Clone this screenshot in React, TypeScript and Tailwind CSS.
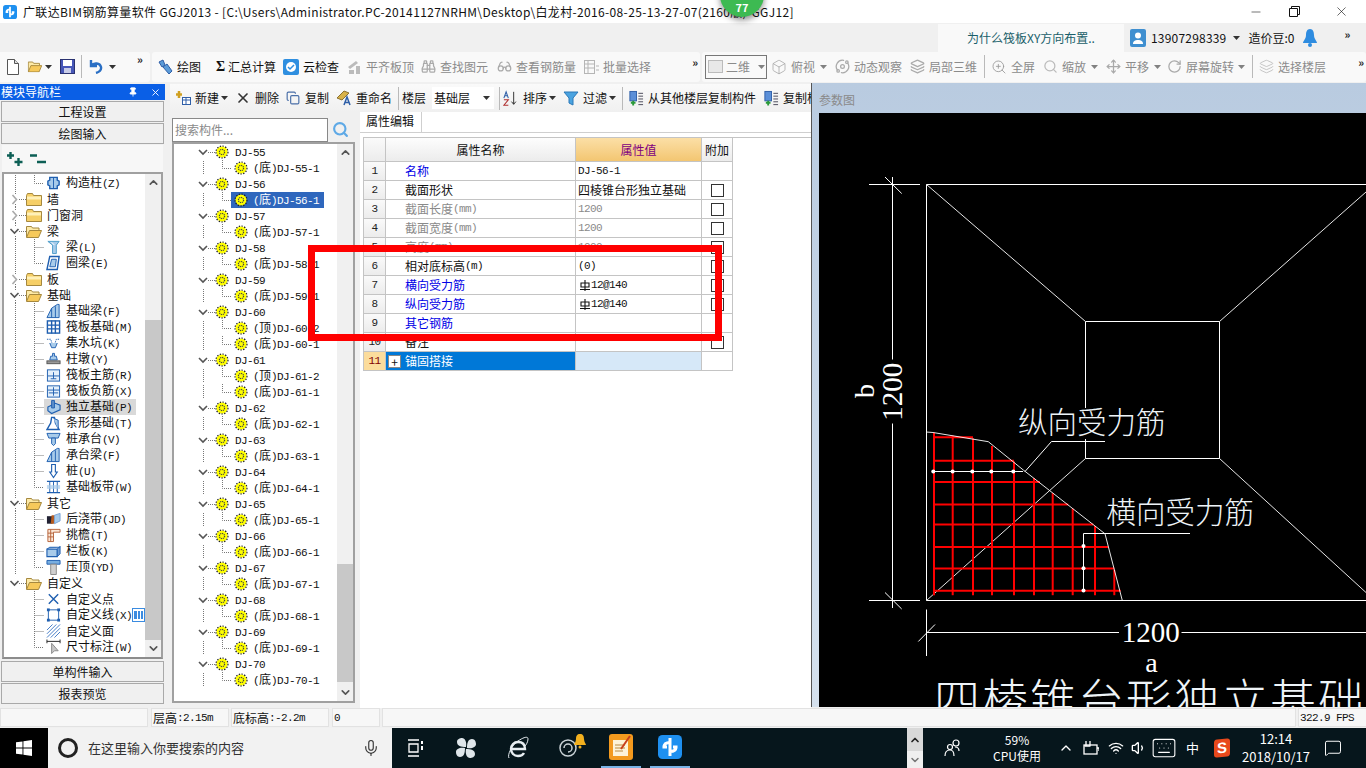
import { ReactNode } from 'react';
import {
  Binoculars, Box, ChevronDown, ChevronUp, Glasses, Keyboard, Layers, MessageSquare, Mic, Minus, Move, Orbit,
  Pin, RotateCw, Search, Volume1, Wifi, X, ZoomIn, Copy,
} from 'lucide-react';

const CJK = "[font-family:'Noto_Sans_CJK_SC',sans-serif]";

// Song-style mix: cjk at 12px, latin narrowed to half width
const Sun = ({ t }: { t: string }) => (
  <>
    {t.split(/([\x20-\x7e]+)/).map((p, i) =>
      /[\x20-\x7e]/.test(p) ? (
        <span key={i} className="[font-family:'Liberation_Mono',monospace] text-[11px] tracking-[-0.6px]">{p}</span>
      ) : (
        <span key={i}>{p}</span>
      ),
    )}
  </>
);

const Caret = ({ className = '' }: { className?: string }) => (
  <svg width="7" height="4" viewBox="0 0 7 4" className={`shrink-0 ${className}`}><path d="M0 0h7L3.5 4z" fill="#333" /></svg>
);
const Sep = () => <div className="w-px h-[23px] bg-[#b9b9b9] shrink-0" />;
const More = ({ className = '' }: { className?: string }) => (
  <span className={`text-[11px] leading-[12px] font-bold text-[#222] self-start mt-[1px] tracking-[-1px] ${className}`}>»</span>
);

const Tool = ({ icon, label, w, gray }: { icon: ReactNode; label: string; w: string; gray?: boolean }) => (
  <div className={`flex items-center gap-[4px] shrink-0 ${w} ${gray ? 'text-[#8b8b8b]' : 'text-[#111]'}`}>
    <span className="w-[16px] h-[16px] flex items-center justify-center shrink-0">{icon}</span>
    <span className="text-[12px] leading-[16px] whitespace-nowrap">{label}</span>
  </div>
);

const Gear = () => (
  <svg width="14" height="14" viewBox="0 0 14 14" className="shrink-0">
    <circle cx="7" cy="7" r="5.6" fill="#ffff00" />
    <circle cx="7" cy="7" r="6" fill="none" stroke="#222" strokeWidth="1.2" strokeDasharray="1.4 1.4" />
    <circle cx="7" cy="7" r="2.6" fill="none" stroke="#444" strokeWidth="1.2" strokeDasharray="1.2 .8" />
  </svg>
);

const FolderShut = () => (
  <svg width="16" height="13" viewBox="0 0 16 13" className="shrink-0">
    <path d="M.5 2.5 1.5.5h5l1 2h8v10H.5z" fill="#f6cf67" stroke="#a5883f" />
    <path d="M1 3.5h14v3H1z" fill="#fff0b8" />
  </svg>
);
const FolderOpen = () => (
  <svg width="16" height="13" viewBox="0 0 16 13" className="shrink-0">
    <path d="M.5 12V1.5h5l1 1.5h6.500v2.500" fill="#fdeaa8" stroke="#a5883f" />
    <path d="M.5 12.500 3.500 5.500h12l-3 7z" fill="#f6c95b" stroke="#a5883f" />
  </svg>
);

const B = '#1f5fb0';
const L = '#a8cbea';
const nav: Record<string, ReactNode> = {
  col: <><path d="M4 2h8v3l2 1v4l-2 1v3H4v-3L2 10V6l2-1z" fill={L} stroke={B} strokeWidth="1.500" /><path d="M8 2v12" stroke={B} /></>,
  beam: <><path d="M2 2h12l-3 4v9H7V6z" fill={L} stroke="#4a9bc9" /><path d="M6 3l3 3" stroke="#fff" /></>,
  ring: <><path d="M4 1h10l-2 14H1z" fill="#fff" stroke={B} strokeWidth="1.500" /><path d="M6 4h5l-1 8H4z" fill={L} stroke={B} /></>,
  fbeam: <><path d="M1 15 6 5l6-4h2v14z" fill={L} stroke={B} /><path d="M6 5v10M10 3v12" stroke={B} /></>,
  raft: <><rect x="1.500" y="1.500" width="13" height="13" fill="#fff" stroke={B} strokeWidth="1.500" /><path d="M1 6h14M1 10h14M6 1v14M10 1v14" stroke={B} strokeWidth="1.500" /></>,
  pit: <><path d="M1 4h4l2 6h2l2-6h4" fill="none" stroke={B} strokeDasharray="1.500 1" /><path d="M4 8l2 5h4l2-5" fill={L} stroke={B} /></>,
  pier: <><path d="M7 2h2v3h2l1 4H4l1-4h2z" fill={L} stroke={B} /><rect x="1" y="10" width="14" height="3" fill="#999" stroke="#555" /></>,
  main: <><rect x="1.500" y="2.500" width="13" height="12" fill="#e4f0fb" stroke={B} /><path d="M2 9h12M8 5v7M5 12h6" stroke={B} /></>,
  neg: <><rect x="1.500" y="2.500" width="13" height="12" fill="#e4f0fb" stroke={B} /><path d="M2 7h12M8 4v9M3 10h10" stroke={B} /></>,
  iso: <><path d="M2 8l8-4 5 2v5l-9 4-4-3z" fill={L} stroke={B} strokeWidth="1.200" /><path d="M6 1h3v8H6z" fill="#5f8fc9" stroke={B} /></>,
  strip: <><path d="M1 15 5 8l1-6h3l1 6 4 7z" fill="#fff" stroke={B} strokeWidth="1.500" /><path d="M8 3l5 2v10" fill={L} stroke={B} /></>,
  cap: <><path d="M1 2h14l-2 5H3z" fill={L} stroke={B} /><path d="M6 7h4v6l-2 2-2-2z" fill={L} stroke={B} /></>,
  pile: <><path d="M6 1h4v8h2l-4 6-4-6h2z" fill="#fff" stroke={B} strokeWidth="1.200" /></>,
  band: <><path d="M1 2h14M1 14h14" stroke={B} strokeWidth="1.500" /><path d="M4 2v12M8 2v12M12 2v12" stroke={B} /><path d="M1 8h14" stroke={L} strokeWidth="4" opacity=".7" /></>,
  post: <><path d="M1 5h6v8H1z" fill="#223" /><path d="M6 4h4l-1 9H5z" fill="#b5591c" /><path d="M9 4l6-2v8l-6 3z" fill={L} stroke="#7aa3d6" /></>,
  eave: <><path d="M2 2h13v3H8v10H2z" fill="#fbe7d6" stroke="#b5623a" /><path d="M2 6h6M2 10h6M5 2v13" stroke="#b5623a" /></>,
  rail: <><path d="M1 6h11v8H1z" fill={L} stroke={B} strokeWidth="1.200" /><path d="M12 6l3-3v8l-3 3zM1 6l3-2h11" fill="#6f9bd1" stroke={B} /></>,
  top: <><path d="M1 1h14v4H1z" fill="#78aee0" stroke={B} /><path d="M5 5h6v11H5z" fill="#cfcfcf" stroke="#888" /></>,
  dot: <path d="M3 3l10 10M13 3 3 13" stroke={B} strokeWidth="1.500" />,
  line: <><rect x="2.500" y="2.500" width="11" height="11" fill="#fff" stroke={B} /><g fill={B}><rect x="1" y="1" width="3" height="3" /><rect x="12" y="1" width="3" height="3" /><rect x="1" y="12" width="3" height="3" /><rect x="12" y="12" width="3" height="3" /></g></>,
  face: <path d="M1 7l6-6M1 11 11 1M1 15 15 1M5 15 15 5M9 15l6-6" stroke="#3f78c4" />,
  dim: <><path d="M1 2h14M1 0v4M15 0v4" stroke="#222" /><path d="M6 4v11l3-3 4 0z" fill="#c8c8c8" stroke="#888" /></>,
};

type NavRow = { label: string; kind: 'open' | 'shut' | 'item'; icon?: string; last?: boolean; sel?: boolean; end?: boolean; tail?: boolean };
const navRows: NavRow[] = [
  { label: '构造柱(Z)', kind: 'item', icon: 'col', last: true },
  { label: '墙', kind: 'shut' },
  { label: '门窗洞', kind: 'shut' },
  { label: '梁', kind: 'open' },
  { label: '梁(L)', kind: 'item', icon: 'beam' },
  { label: '圈梁(E)', kind: 'item', icon: 'ring', last: true },
  { label: '板', kind: 'shut' },
  { label: '基础', kind: 'open' },
  { label: '基础梁(F)', kind: 'item', icon: 'fbeam' },
  { label: '筏板基础(M)', kind: 'item', icon: 'raft' },
  { label: '集水坑(K)', kind: 'item', icon: 'pit' },
  { label: '柱墩(Y)', kind: 'item', icon: 'pier' },
  { label: '筏板主筋(R)', kind: 'item', icon: 'main' },
  { label: '筏板负筋(X)', kind: 'item', icon: 'neg' },
  { label: '独立基础(P)', kind: 'item', icon: 'iso', sel: true },
  { label: '条形基础(T)', kind: 'item', icon: 'strip' },
  { label: '桩承台(V)', kind: 'item', icon: 'cap' },
  { label: '承台梁(F)', kind: 'item', icon: 'fbeam' },
  { label: '桩(U)', kind: 'item', icon: 'pile' },
  { label: '基础板带(W)', kind: 'item', icon: 'band', last: true },
  { label: '其它', kind: 'open' },
  { label: '后浇带(JD)', kind: 'item', icon: 'post' },
  { label: '挑檐(T)', kind: 'item', icon: 'eave' },
  { label: '栏板(K)', kind: 'item', icon: 'rail' },
  { label: '压顶(YD)', kind: 'item', icon: 'top', last: true },
  { label: '自定义', kind: 'open', end: true },
  { label: '自定义点', kind: 'item', icon: 'dot', tail: true },
  { label: '自定义线(X)', kind: 'item', icon: 'line', tail: true },
  { label: '自定义面', kind: 'item', icon: 'face', tail: true },
  { label: '尺寸标注(W)', kind: 'item', icon: 'dim', last: true, tail: true },
];

const Dots = ({ d }: { d: string }) => <path d={d} fill="none" stroke="#777" strokeDasharray="1 1" />;

const NavTree = () => (
  <div className="flex-1 -ml-[4px] pt-[1px] overflow-hidden">
    {navRows.map((r) => (
      <div key={r.label} className="flex items-center h-[16px]">
        {r.kind === 'item' ? (
          <>
            <svg width="44" height="16" className="shrink-0">
              {!r.tail && <Dots d="M15.500 0v16" />}
              <Dots d={r.last ? 'M34.500 0v8.500h10' : 'M34.500 0v16M34.500 8.500h10'} />
            </svg>
            <div className={`flex items-center h-[16px] gap-[5px] pl-[2px] w-[92px] ${r.sel ? 'bg-[#d9d9d9]' : ''}`}>
              <svg width="15" height="16" viewBox="0 0 16 16" className="shrink-0">{nav[r.icon!]}</svg>
              <span className="text-[12px] leading-[16px] text-[#111] whitespace-nowrap"><Sun t={r.label} /></span>
            </div>
            {r.label === '自定义线(X)' && (
              <svg width="13" height="14" viewBox="0 0 13 14" className="shrink-0 -ml-[3px]"><rect x=".5" y=".5" width="12" height="13" fill="#fff" stroke="#3a8be0" /><path d="M2 3h3v8H2zM6 3h2v8H6zM9 3h2v8H9z" fill="#3a8be0" /></svg>
            )}
          </>
        ) : (
          <>
            <svg width="26" height="16" className="shrink-0">
              <Dots d={r.end ? 'M19 8.500h7' : 'M19 8.500h7M15.500 13v3M15.500 0v3'} />
              <path d={r.kind === 'open' ? 'M10.500 6l4 4 4-4' : 'M12.500 4l4 4.500-4 4.500'} fill="none" stroke={r.kind === 'open' ? '#555' : '#aaa'} strokeWidth="1.600" />
            </svg>
            {r.kind === 'open' ? <FolderOpen /> : <FolderShut />}
            <span className="text-[12px] leading-[16px] text-[#111] ml-[5px]">{r.label}</span>
          </>
        )}
      </div>
    ))}
  </div>
);

const NavBtn = ({ label }: { label: string }) => (
  <div className="h-[21px] mx-[1px] mb-[1px] flex items-center justify-center bg-[#f0f0f0] border border-[#a9a9a9] text-[12px] leading-[16px] text-[#111] shrink-0">{label}</div>
);

const VScroll = ({ thumb }: { thumb: string }) => (
  <div className="w-[16px] shrink-0 flex flex-col items-center bg-[#f0f0f0]">
    <ChevronUp size={13} strokeWidth={3} className="text-[#555] my-[2px] shrink-0" />
    <div className="flex-1 w-full flex flex-col justify-end"><div className={`w-full bg-[#c8c8c8] ${thumb}`} /></div>
    <ChevronDown size={13} strokeWidth={3} className="text-[#555] my-[2px] shrink-0" />
  </div>
);

const djNums = [55, 56, 57, 58, 59, 60, 61, 62, 63, 64, 65, 66, 67, 68, 69, 70];

const DjTree = () => (
  <div className="flex-1 overflow-hidden">
    {djNums.map((n) => (
      <div key={n}>
        <div className="flex items-center h-[16px]">
          <svg width="41" height="16" className="shrink-0">
            <path d="M25 6l4 4 4-4" fill="none" stroke="#555" strokeWidth="1.600" />
            <Dots d="M34 8.500h7" />
          </svg>
          <Gear />
          <span className="ml-[6px] text-[12px] leading-[16px] text-[#111]"><Sun t={`DJ-${n}`} /></span>
        </div>
        {(n === 60 || n === 61 ? ['顶', '底'] : ['底']).map((k) => (
          <div key={k} className="flex items-center h-[16px]">
            <svg width="57" height="16" className="shrink-0"><Dots d="M29.500 1v13M48.500 0v8.500h9" /></svg>
            <div className={`flex items-center h-[16px] pl-[3px] w-[93px] whitespace-nowrap ${k === '底' && n === 56 ? 'bg-[#2f67bd] text-white' : 'text-[#111]'}`}>
              <Gear />
              <span className="ml-[5px] text-[12px] leading-[16px]"><Sun t={`(${k})DJ-${n}-${k === '顶' ? 2 : 1}`} /></span>
            </div>
          </div>
        ))}
      </div>
    ))}
  </div>
);

type Prop = { no: number; name: string; value?: string; color: string; check?: boolean; valColor?: string };
const props: Prop[] = [
  { no: 1, name: '名称', value: 'DJ-56-1', color: 'text-[#0000e6]' },
  { no: 2, name: '截面形状', value: '四棱锥台形独立基础', color: 'text-[#111]', check: true },
  { no: 3, name: '截面长度(mm)', value: '1200', color: 'text-[#8a8a8a]', valColor: 'text-[#8a8a8a]', check: true },
  { no: 4, name: '截面宽度(mm)', value: '1200', color: 'text-[#8a8a8a]', valColor: 'text-[#8a8a8a]', check: true },
  { no: 5, name: '高度(mm)', value: '1000', color: 'text-[#8a8a8a]', valColor: 'text-[#8a8a8a]', check: true },
  { no: 6, name: '相对底标高(m)', value: '(0)', color: 'text-[#111]', check: true },
  { no: 7, name: '横向受力筋', value: '⏁12@140', color: 'text-[#0000e6]', check: true },
  { no: 8, name: '纵向受力筋', value: '⏁12@140', color: 'text-[#0000e6]', check: true },
  { no: 9, name: '其它钢筋', color: 'text-[#0000e6]' },
  { no: 10, name: '备注', color: 'text-[#111]', check: true },
];

const cell = 'border-r border-b border-[#c4c4c4] h-[19px] flex items-center text-[12px] leading-[16px] overflow-hidden whitespace-nowrap';
const numCell = `${cell} justify-center bg-gradient-to-b from-[#fafafa] to-[#ececec] text-[#222]`;

const HRebar = () => (
  <svg width="10" height="11" viewBox="0 0 10 11" className="shrink-0 mr-[1px]"><path d="M1 3h8v4H1zM5 0v11M0 9.500h10" fill="none" stroke="#111" strokeWidth="1.100" /></svg>
);

const PropTable = () => (
  <div className="grid grid-cols-[22px_190px_126px_31px] w-[370px] border-l border-[#c4c4c4]">
    <div className="h-[24px] border-r border-b border-[#c4c4c4] bg-gradient-to-b from-[#fafafa] to-[#ececec]" />
    <div className="h-[24px] border-r border-b border-[#c4c4c4] bg-gradient-to-b from-[#fdfdfd] to-[#ececec] flex items-center justify-center text-[12px] text-[#111]">属性名称</div>
    <div className="h-[24px] border-r border-b border-[#c4c4c4] bg-gradient-to-b from-[#fbdfa6] to-[#f3c671] flex items-center justify-center text-[12px] text-[#800080]">属性值</div>
    <div className="h-[24px] border-r border-b border-[#c4c4c4] bg-gradient-to-b from-[#fdfdfd] to-[#ececec] flex items-center justify-center text-[12px] text-[#111]">附加</div>
    {props.map((p) => (
      <div key={p.no} className="contents">
        <div className={numCell}><Sun t={String(p.no)} /></div>
        <div className={`${cell} pl-[19px] ${p.color}`}><Sun t={p.name} /></div>
        <div className={`${cell} pl-[2px] ${p.valColor ?? 'text-[#111]'}`}>
          {p.value?.startsWith('⏁') ? (
            <span className="flex items-center pl-[2px]"><HRebar /><Sun t={p.value.slice(1)} /></span>
          ) : p.value ? (
            <Sun t={p.value} />
          ) : null}
        </div>
        <div className={`${cell} justify-center`}>
          {p.check && <div className="w-[13px] h-[13px] border border-[#333] bg-white" />}
        </div>
      </div>
    ))}
    <div className={`${cell} justify-center bg-[#fbdc9c] text-[#800000]`}><Sun t="11" /></div>
    <div className={`${cell} bg-[#0078d7] text-white pl-[2px]`}>
      <div className="w-[13px] h-[13px] bg-white border border-[#888] flex items-center justify-center text-[#111] text-[12px] leading-[11px] mr-[4px]">+</div>
      锚固搭接
    </div>
    <div className={`${cell} bg-[#d6e8f8]`} />
    <div className={cell} />
  </div>
);

const dim = { stroke: '#fff', strokeWidth: 1, fill: 'none' };
const redV: [number, number][] = [[934, 432.8], [952.7, 435.5], [973, 438.3], [992, 445.9], [1014, 461.4], [1034, 477.9], [1052.7, 493.1], [1072.7, 508.6], [1095, 525.9], [1114.3, 570]];
const redH: [number, number][] = [[437.2, 973], [460.7, 1014], [482, 1040], [504.5, 1068.3], [524.5, 1093.3], [546.9, 1108.3], [568.6, 1114.3], [590.7, 1120.7]];
const titleChars = '四棱锥台形独立基础'.split('');

const Drawing = () => (
  <svg viewBox="819 113 547 594" width="547" height="594" className="block bg-black">
    <g {...dim}>
      <path d="M926.500 184.500H1366M926.500 184.500V600.500H1366" />
      <path d="M1085.500 408V321.500H1219.500V458.500H1085.500V439" />
      <path d="M926.500 184.500 1085.500 321.500M1366 192 1219.500 321.500M1219.500 458.500 1366 592.500M1085.500 458.500 926.500 600.500" strokeWidth=".9" />
      <path d="M892.500 177V359.500M892.500 423.500V608M869 184.500H920M869 600.500H920M885 177 901.700 193.500M885 592.500 901.700 609" />
      <path d="M926.500 609.500V656M926.500 632.500H1119M1181.500 632.500H1366M918.300 641.500 935 624.500" />
    </g>
    <g stroke="#ff0000" strokeWidth="2">
      {redV.map(([x, y]) => <line key={x} x1={x} y1={y} x2={x} y2={595.2} />)}
      {redH.map(([y, x]) => <line key={y} x1={934} y1={y} x2={x} y2={y} />)}
    </g>
    <g {...dim}>
      <path d="M926 432 933 432.500 988.300 441.700 1023.300 470 1105 533.800 1122.300 600.500" strokeWidth=".9" />
      <path d="M1105 441.500H1051.500L1025 471.500M932.500 471.500H1023M1190 533.500H1083.500V590.500" />
    </g>
    <g fill="#fff">
      {[933.3, 952.6, 972.3, 991.3, 1013.3].map((x) => <circle key={x} cx={x} cy={471.5} r="2" />)}
      {[545.9, 568.3, 590.5].map((y) => <circle key={y} cx={1083.5} cy={y} r="2" />)}
    </g>
    <g fill="#fff" className="[font-family:'Liberation_Serif',serif]" fontSize="28">
      <text x="1150.700" y="642" textAnchor="middle" fontSize="29">1200</text>
      <text x="1151.500" y="672" textAnchor="middle">a</text>
      <text transform="translate(902 391.700) rotate(-90)" textAnchor="middle" fontSize="29">1200</text>
      <text transform="translate(874 391) rotate(-90)" textAnchor="middle">b</text>
    </g>
    <g fill="#eef4f8" fontWeight="300" className={CJK}>
      <text x="1018" y="433" fontSize="29.500">纵向受力筋</text>
      <text x="1106.500" y="522.500" fontSize="29.500">横向受力筋</text>
      {titleChars.map((c, i) => <text key={i} x={934 + i * 48} y="717" fontSize="46">{c}</text>)}
    </g>
  </svg>
);

const SubTool = ({ icon, label, w, caret }: { icon: ReactNode; label: string; w: string; caret?: boolean }) => (
  <div className={`flex items-center shrink-0 ${w}`}>
    <span className="w-[16px] h-[16px] flex items-center justify-center shrink-0">{icon}</span>
    <span className="ml-[4px] text-[12px] leading-[16px] text-[#111] whitespace-nowrap">{label}</span>
    {caret && <Caret className="ml-[2px]" />}
  </div>
);

const CopyFloor = () => (
  <svg width="17" height="17" viewBox="0 0 17 17"><rect x="2" y="1" width="7" height="10" fill="#5b8fd8" stroke="#2f5fa8" /><path d="M3 13h5M5.500 11v5" stroke="#2a9a3a" strokeWidth="2" /><path d="M11 3h5M11 6h5M11 9h5M11 12h5M11 15h5" stroke="#445" /></svg>
);

const Main = () => (
  <div className="flex-1 flex min-h-0 bg-[#f0f0f0]">
    {/* module nav */}
    <div className="w-[165px] shrink-0 flex flex-col h-[621px] mt-[1px]">
      <div className="h-[16px] bg-[#0a5fe6] text-white text-[12px] leading-[16px] flex items-center shrink-0">
        <span className="ml-[1px] flex-1">模块导航栏</span>
        <Pin size={10} fill="#fff" className="mr-[12px]" />
        <X size={11} className="mr-[4px]" />
      </div>
      <div className="h-[1px] shrink-0" />
      <NavBtn label="工程设置" />
      <NavBtn label="绘图输入" />
      <div className="h-[27px] mx-[2px] bg-[#f7f7f7] flex items-center pl-[4px] gap-[5px] shrink-0">
        <svg width="18" height="16" viewBox="0 0 18 16"><path d="M4.500 1v7M1 4.500h7M12.500 7v8M8.500 11h8" stroke="#0d5f55" strokeWidth="2.400" /></svg>
        <svg width="18" height="16" viewBox="0 0 18 16"><path d="M1 4.500h7M8 11h9" stroke="#0d5f55" strokeWidth="2.400" /></svg>
      </div>
      <div className="flex-1 mx-[2px] flex border-2 border-[#a0a0a0] border-b-[#8c8c8c] bg-white min-h-0 overflow-hidden">
        <NavTree />
        <VScroll thumb="h-[320px]" />
      </div>
      <div className="h-[2px] shrink-0" />
      <NavBtn label="单构件输入" />
      <NavBtn label="报表预览" />
    </div>

    {/* component list + property grid */}
    <div className="w-[641px] shrink-0 flex flex-col ml-[5px] h-[625px]">
      <div className="h-[28px] shrink-0 mt-[1px] flex items-center bg-gradient-to-b from-[#fafafa] to-[#f0f0f0] pl-[5px] overflow-hidden">
        <SubTool w="w-[60px]" label="新建" caret icon={<svg width="16" height="16" viewBox="0 0 16 16"><path d="M4 1v7M1 4.500h6" stroke="#d0a020" strokeWidth="2.500" /><rect x="7.500" y="7.500" width="8" height="7" fill="#fff" stroke="#2f5fa8" /><path d="M8 10h7M11 8v6" stroke="#2f5fa8" /></svg>} />
        <SubTool w="w-[50px]" label="删除" icon={<X size={16} strokeWidth={2.500} className="text-[#333]" />} />
        <SubTool w="w-[51px]" label="复制" icon={<Copy size={14} className="text-[#4a6fa8]" />} />
        <SubTool w="w-[62px]" label="重命名" icon={<svg width="16" height="16" viewBox="0 0 16 16"><path d="M1 8 8 1l5 2-7 7z" fill="#d8b24a" stroke="#8a7030" /><path d="M8 15l3-8 3 8M9 12.500h4" fill="none" stroke="#2f5fa8" strokeWidth="1.500" /></svg>} />
        <Sep />
        <span className="ml-[3px] w-[30px] text-[12px] leading-[16px] text-[#111]">楼层</span>
        <div className="w-[62px] h-[22px] bg-white flex items-center justify-between text-[12px] leading-[16px] text-[#111] pl-[2px] pr-[4px]">基础层<Caret /></div>
        <div className="w-[5px]" />
        <Sep />
        <SubTool w="w-[60px] ml-[3px]" label="排序" caret icon={<svg width="18" height="17" viewBox="0 0 18 17"><path d="M1 8l2.500-7L6 8M2 5.500h3" fill="none" stroke="#2f5fa8" strokeWidth="1.200" /><path d="M1 10h5L1 16h5" fill="none" stroke="#b03030" strokeWidth="1.200" /><path d="M12 1v14M9.500 12l2.500 3 2.500-3" fill="none" stroke="#222" /></svg>} />
        <SubTool w="w-[58px]" label="过滤" caret icon={<svg width="16" height="16" viewBox="0 0 16 16"><path d="M1 2h14L10 8v7l-4-2V8z" fill="#4aa3e0" stroke="#2a78b8" /></svg>} />
        <div className="w-[1px]" />
        <Sep />
        <SubTool w="w-[135px] ml-[5px]" label="从其他楼层复制构件" icon={<CopyFloor />} />
        <SubTool w="w-[48px]" label="复制构件" icon={<CopyFloor />} />
      </div>
      <div className="flex-1 flex min-h-0">
        <div className="w-[183px] ml-[2px] shrink-0 flex flex-col h-[591px]">
          <div className="h-[25px] flex items-center shrink-0 mt-[5px]">
            <div className="w-[156px] h-[24px] bg-white border border-[#888] flex items-center pl-[2px] text-[12px] text-[#8a8a8a]">搜索构件...</div>
            <Search size={17} strokeWidth={3} className="ml-[4px] text-[#5ea9e6]" />
          </div>
          <div className="flex-1 flex border-2 border-[#a0a0a0] bg-white min-h-0 overflow-hidden">
            <DjTree />
            <VScroll thumb="h-[118px] mb-[2px]" />
          </div>
        </div>
        <div className="w-[451px] ml-[5px] shrink-0 flex flex-col bg-white">
          <div className="h-[21px] flex items-end border-b border-[#cfcfcf] shrink-0">
            <div className="w-[62px] h-[20px] bg-white border-r border-[#cfcfcf] text-[12px] leading-[18px] pl-[6px] text-[#111]">属性编辑</div>
          </div>
          <div className="mt-[4px] ml-[3px] border-t border-[#c4c4c4] flex-1"><PropTable /></div>
        </div>
      </div>
    </div>

    {/* parameter picture */}
    <div className="flex-1 flex flex-col border-l border-[#555] bg-gradient-to-b from-[#b9cbe0] to-[#d5e1ee] pl-[7px] h-[624px]">
      <div className="h-[30px] flex items-center shrink-0 text-[12px] text-[#8a8a8a] pt-[4px]">参数图</div>
      <Drawing />
    </div>
  </div>
);

const StatusCell = ({ w, children }: { w: string; children?: ReactNode }) => (
  <div className={`h-[19px] bg-[#f7f7f7] border border-[#e2e2e2] flex items-center pl-[1px] text-[12px] leading-[16px] text-[#111] whitespace-nowrap shrink-0 ${w}`}>{children}</div>
);

const AppLogo = ({ size }: { size: number }) => (
  <svg width={size} height={size} viewBox="0 0 16 16" className="shrink-0">
    <rect width="16" height="16" rx="3" fill="#1e90f0" />
    <path d="M8 2v12M4 8c0-3 3-3 4-3M12 8c0 3-3 3-4 3M3 8h3M10 8h3" stroke="#fff" strokeWidth="2" fill="none" />
  </svg>
);

const Taskbar = () => (
  <div className="h-[40px] shrink-0 flex items-center bg-[#06161c] text-white">
    <div className="w-[48px] h-full bg-black flex items-center justify-center">
      <svg width="16" height="16" viewBox="0 0 16 16" fill="#fff"><path d="M0 2.300 6.500 1.400v6.100H0zM7.400 1.300 16 0v7.500H7.400zM0 8.400h6.500v6.200L0 13.700zM7.400 8.400H16V16l-8.600-1.300z" /></svg>
    </div>
    <div className="w-[344px] h-full bg-[#f2f2f2] flex items-center text-[#333] text-[13px] leading-[18px]">
      <div className="w-[20px] h-[20px] ml-[10px] rounded-full border-[3px] border-[#222] shrink-0" />
      <span className="ml-[10px] flex-1">在这里输入你要搜索的内容</span>
      <Mic size={18} strokeWidth={1.500} className="mr-[12px] text-[#333]" />
    </div>
    <div className="w-[531px] h-full flex items-center relative">
      <svg width="16" height="18" viewBox="0 0 16 18" className="ml-[16px]" fill="none" stroke="#fff" strokeWidth="1.300"><path d="M0 1h11M0 17h11M1 5h9v8H1z" /><path d="M14 2v3M14 7v4" strokeWidth="2" /></svg>
      <svg width="22" height="22" viewBox="0 0 22 22" className="ml-[31px]" fill="#dfe6ea"><path d="M11 10C6 10 2 9 2 5c0-3 3-4 5-4 3 0 5 4 4 9zM12 11c0-5 1-9 5-9 3 0 4 3 4 5 0 3-4 5-9 4zM11 12c5 0 9 1 9 5 0 3-3 4-5 4-3 0-5-4-4-9zM10 11c0 5-1 9-5 9-3 0-4-3-4-5 0-3 4-5 9-4z" /></svg>
      <svg width="24" height="24" viewBox="0 0 24 24" className="ml-[29px]" fill="none" stroke="#e8eef2"><path d="M5 13h14c0-5-3-7-7-7s-7 3-7 7 3 7 7 7c3 0 5-1 6-3" strokeWidth="2.400" /><path d="M3 22C1 19 6 9 12 5s10-5 10-2-2 6-3 7" strokeWidth="1" /></svg>
      <div className="ml-[28px] w-[30px] h-[26px] flex items-center relative">
        <svg width="20" height="20" viewBox="0 0 20 20" fill="none" stroke="#c9d2d6" strokeWidth="1.500"><circle cx="10" cy="10" r="8" /><path d="M6 10a4 4 0 1 1 4 4" /></svg>
        <svg width="14" height="16" viewBox="0 0 14 16" className="absolute left-[15px] -top-[2px]"><path d="M7 1c3 0 4 2 4 5 0 3 2 5 2 6H1c0-1 2-3 2-6 0-3 1-5 4-5z" fill="#f2b01e" /><circle cx="7" cy="14" r="1.500" fill="#f2b01e" /></svg>
      </div>
      <div className="ml-[13px] w-[40px] h-full flex items-center justify-center border-b-[2px] border-[#79b3e6]">
        <svg width="24" height="26" viewBox="0 0 24 26"><rect width="24" height="26" rx="3" fill="#f39a1e" /><rect x="4" y="6" width="15" height="16" fill="#fdf3d8" /><path d="M6 11h10M6 14h10M6 17h8" stroke="#b88a40" /><path d="M12 15 21 2" stroke="#c8401c" strokeWidth="2" /></svg>
      </div>
      <div className="ml-[9px] w-[40px] h-full flex items-center justify-center border-b-[2px] border-[#79b3e6]"><AppLogo size={24} /></div>
      <div className="absolute right-0 top-0 w-[16px] h-full flex flex-col items-center">
        <div className="w-full h-[23px] bg-[#d9d9d9] flex items-center justify-center"><ChevronUp size={12} strokeWidth={3.500} className="text-[#222]" /></div>
        <div className="w-full flex-1 bg-[#f0f0f0] flex items-center justify-center"><ChevronDown size={12} strokeWidth={3} className="text-[#777]" /></div>
      </div>
    </div>
    <svg width="18" height="20" viewBox="0 0 18 20" className="ml-[21px]" fill="none" stroke="#fff" strokeWidth="1.200"><circle cx="12" cy="5" r="3" /><circle cx="6" cy="9" r="2.500" /><path d="M1 18c0-4 2-6 5-6s4 2 4 6M11 9c2 0 4 1 4 4" /></svg>
    <div className="w-[70px] ml-[20px] flex flex-col items-center text-[12px] leading-[16px]">
      <span>59%</span>
      <span>CPU使用</span>
    </div>
    <ChevronUp size={16} className="ml-[6px]" />
    <svg width="18" height="16" viewBox="0 0 18 16" className="ml-[7px]" fill="none" stroke="#fff" strokeWidth="1.300"><rect x="3" y="5" width="13" height="9" /><path d="M16 8h2v3M5 1v5M9 1v5M3.500 6h6" /></svg>
    <Wifi size={16} className="ml-[9px]" />
    <Volume1 size={16} className="ml-[7px]" />
    <Keyboard size={26} strokeWidth={1} className="ml-[4px]" />
    <span className={`ml-[9px] w-[14px] text-[13px] leading-[18px] ${CJK}`}>中</span>
    <div className="ml-[14px] w-[16px] h-[18px] rounded-[3px] bg-[#e8491c] text-white font-bold flex items-center justify-center text-[15px] leading-[18px] -skew-y-6 [font-family:'Liberation_Sans',sans-serif]">S</div>
    <div className="w-[80px] ml-[6px] flex flex-col items-center text-[13px] leading-[18px]">
      <span>12:14</span>
      <span>2018/10/17</span>
    </div>
    <MessageSquare size={18} strokeWidth={1.300} className="ml-[8px]" />
  </div>
);

export default function App() {
  return (
    <div className={`relative w-[1366px] h-[768px] overflow-hidden flex flex-col bg-[#f0f0f0] ${CJK}`}>
      {/* title bar */}
      <div className="h-[23px] shrink-0 bg-white flex items-center pl-[3px] text-[12px] leading-[16px] text-[#111]">
        <AppLogo size={14} />
        <span className="ml-[6px] whitespace-nowrap w-[770px] tracking-[0.35px]">广联达BIM钢筋算量软件 GGJ2013 - [C:\Users\Administrator.PC-20141127NRHM\Desktop\白龙村-2016-08-25-13-27-07(2160版)-GGJ12]</span>
        <Minus size={14} strokeWidth={1} className="ml-[456px]" />
        <svg width="11" height="11" viewBox="0 0 11 11" className="ml-[26px]" fill="none" stroke="#111"><path d="M2.500 2.500v-2h8v8h-2M.5 2.500h8v8h-8z" /></svg>
        <X size={15} strokeWidth={1} className="ml-[34px]" />
      </div>
      {/* account row */}
      <div className="h-[29px] shrink-0 flex items-center">
        <div className="ml-[938px] w-[186px] h-[28px] bg-[#f9f9f9] flex items-center justify-center text-[12px] leading-[16px] text-[#1a5f6a]">为什么筏板XY方向布置..</div>
        <div className="ml-[6px] w-[16px] h-[18px] rounded-[2px] bg-[#3f8fd0] flex items-center justify-center">
          <svg width="12" height="14" viewBox="0 0 12 14" fill="#fff"><circle cx="6" cy="4.500" r="3" /><path d="M1 13c0-3 2-4 5-4s5 1 5 4z" /></svg>
        </div>
        <span className="ml-[5px] text-[12px] leading-[16px] text-[#111] tracking-[0.2px]">13907298339</span>
        <Caret className="ml-[7px]" />
        <span className="ml-[8px] text-[12px] leading-[16px] text-[#111]">造价豆:0</span>
        <svg width="14" height="18" viewBox="0 0 14 18" className="ml-[9px]"><path d="M7 0c3 0 4 3 4 6 0 4 3 6 3 8H0c0-2 3-4 3-8 0-3 1-6 4-6z" fill="#2e8ce0" /><circle cx="7" cy="16" r="2" fill="#2e8ce0" /></svg>
        <More className="ml-[27px] mt-[5px]" />
      </div>
      {/* main toolbar */}
      <div className="h-[31px] shrink-0 flex items-center -mt-[1px] mb-[1px]">
        <div className="w-[150px] h-[30px] bg-[#f9f9f9] flex items-center pl-[6px] rounded-r-[3px] relative">
          <svg width="14" height="16" viewBox="0 0 14 16" className="shrink-0"><path d="M1.500.5h7l4 4v11h-11z" fill="#fff" stroke="#555" /><path d="M8.500.5v4h4" fill="#ddd" stroke="#555" /></svg>
          <span className="ml-[7px] scale-90"><FolderOpen /></span>
          <Caret className="ml-[2px]" />
          <svg width="15" height="15" viewBox="0 0 15 15" className="ml-[8px] shrink-0"><rect x=".5" y=".5" width="14" height="14" fill="#4757b8" stroke="#2a3270" /><rect x="3" y="1" width="9" height="6" fill="#fff" /><rect x="4" y="9" width="7" height="5" fill="#c8cce8" /></svg>
          <div className="ml-[6px]"><Sep /></div>
          <svg width="14" height="15" viewBox="0 0 14 15" className="ml-[7px] shrink-0" fill="none" stroke="#2a6fc4" strokeWidth="2.400"><path d="M2 1v6h6M2 7c3-4 9-3 10 1 .6 3-2 5-5 6" /></svg>
          <Caret className="ml-[6px]" />
          <More className="ml-[21px]" />
        </div>
        <div className="ml-[2px] w-[548px] h-[30px] bg-[#f9f9f9] flex items-center pl-[5px] rounded-[3px] relative">
          <Tool w="w-[56px]" label="绘图" icon={<svg width="16" height="16" viewBox="0 0 16 16"><path d="M2 3 6 1l2 5-3 2zM6 8l4-3 5 7-3 3z" fill="#5b9bd8" stroke="#2f5fa8" /></svg>} />
          <div className="w-[70px] flex items-center shrink-0">
            <span className="w-[15px] text-center text-[14px] font-bold text-[#111] [font-family:'Liberation_Serif',serif]">Σ</span>
            <span className="text-[12px] leading-[16px] text-[#111]">汇总计算</span>
          </div>
          <Tool w="w-[63px]" label="云检查" icon={<svg width="16" height="16" viewBox="0 0 16 16"><rect width="16" height="16" rx="2" fill="#2f8fe0" /><circle cx="8" cy="8" r="5" fill="#fff" /><path d="M5 8l2 2 4-4" fill="none" stroke="#2f8fe0" strokeWidth="1.500" /></svg>} />
          <Tool gray w="w-[74px]" label="平齐板顶" icon={<svg width="16" height="16" viewBox="0 0 16 16" fill="#bbb"><path d="M2 8l8-6 2 2-8 6zM3 11h5v4H3zM10 7h4v8h-4z" /></svg>} />
          <Tool gray w="w-[76px]" label="查找图元" icon={<Binoculars size={15} className="text-[#aaa]" />} />
          <Tool gray w="w-[87px]" label="查看钢筋量" icon={<Glasses size={15} className="text-[#aaa]" />} />
          <Tool gray w="w-[80px]" label="批量选择" icon={<svg width="16" height="16" viewBox="0 0 16 16" fill="none" stroke="#b5b5b5"><rect x="1.500" y="1.500" width="10" height="13" /><path d="M1 5h11M1 9h11M5 1v14M13 7h3M13 11h3" /></svg>} />
          <More className="absolute right-[3px] top-[3px]" />
        </div>
        <div className="ml-[2px] flex-1 h-[30px] bg-[#f9f9f9] flex items-center pl-[3px] rounded-[3px] relative">
          <div className="w-[62px] h-[24px] border border-[#777] flex items-center pl-[2px] shrink-0 text-[12px] leading-[16px] text-[#8b8b8b]">
            <div className="w-[15px] h-[13px] bg-[#e8e8e8] border border-[#bbb] mr-[3px]" />二维<Caret className="ml-[8px] opacity-60" />
          </div>
          <div className="ml-[4px]" />
          <Tool gray w="w-[49px]" label="俯视" icon={<Box size={16} strokeWidth={1} className="text-[#999]" />} />
          <Caret className="mr-[7px] opacity-60" />
          <Tool gray w="w-[75px]" label="动态观察" icon={<Orbit size={15} className="text-[#aaa]" />} />
          <Tool gray w="w-[73px]" label="局部三维" icon={<Layers size={15} className="text-[#aaa]" />} />
          <div className="ml-[2px] mr-[6px]"><Sep /></div>
          <Tool gray w="w-[51px]" label="全屏" icon={<ZoomIn size={16} strokeWidth={1.300} className="text-[#999]" />} />
          <Tool gray w="w-[49px]" label="缩放" icon={<Search size={15} strokeWidth={2} className="text-[#bbb]" />} />
          <Caret className="mr-[7px] opacity-60" />
          <Tool gray w="w-[49px]" label="平移" icon={<Move size={15} className="text-[#aaa]" />} />
          <Caret className="mr-[5px] opacity-60" />
          <Tool gray w="w-[72px]" label="屏幕旋转" icon={<RotateCw size={15} className="text-[#aaa]" />} />
          <Caret className="opacity-60" />
          <div className="ml-[7px] mr-[5px]"><Sep /></div>
          <Tool gray w="w-[90px]" label="选择楼层" icon={<Layers size={15} strokeWidth={1.300} className="text-[#bbb]" />} />
          <More className="absolute right-[3px] top-[3px]" />
        </div>
      </div>
      <Main />
      {/* status bar */}
      <div className="h-[20px] shrink-0 flex items-start gap-[2px] bg-[#f0f0f0]">
        <StatusCell w="w-[148px]" />
        <StatusCell w="w-[78px] ml-[1px]"><Sun t="层高:2.15m" /></StatusCell>
        <StatusCell w="w-[98px]"><Sun t="底标高:-2.2m" /></StatusCell>
        <StatusCell w="w-[48px] ml-[1px]"><Sun t="0" /></StatusCell>
        <StatusCell w="w-[914px]" />
        <StatusCell w="w-[69px]"><Sun t="322.9 FPS" /></StatusCell>
      </div>
      <Taskbar />

      {/* floating speed badge */}
      <div className="absolute left-[720px] -top-[27px] w-[44px] h-[44px] rounded-full bg-[#3dba52] shadow-[0_3px_6px_rgba(0,0,0,0.45)] flex items-end justify-center text-white text-[11px] leading-[14px] font-bold pb-[3px]">77</div>
      {/* red annotation box */}
      <div className="absolute left-[308px] top-[245px] w-[414px] h-[96px] border-[7px] border-[#ff0000]" />
    </div>
  );
}
